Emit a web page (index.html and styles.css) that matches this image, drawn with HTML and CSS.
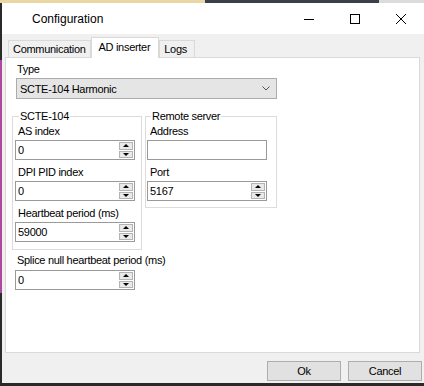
FILE: index.html
```html
<!DOCTYPE html>
<html lang="en">
<head>
  <meta charset="UTF-8" />
  <title>Configuration</title>
  <link rel="stylesheet" href="styles.css">
</head>
<body>
  <div class="desk-top"></div>
  <div class="window">
    <div class="titlebar">
      <div class="title">Configuration</div>
      <div class="caption-buttons">
        <div class="cap-btn">
          <svg width="10" height="10" viewBox="0 0 10 10"><path d="M0 5.5H10" stroke="#000" stroke-width="1"/></svg>
        </div>
        <div class="cap-btn">
          <svg width="10" height="10" viewBox="0 0 10 10"><rect x="0.5" y="0.5" width="9" height="9" fill="none" stroke="#000" stroke-width="1"/></svg>
        </div>
        <div class="cap-btn">
          <svg width="10" height="10" viewBox="0 0 10 10"><path d="M0 0L10 10M10 0L0 10" stroke="#000" stroke-width="1"/></svg>
        </div>
      </div>
    </div>

    <div class="tabs">
      <div class="tab">Communication</div>
      <div class="tab active">AD inserter</div>
      <div class="tab logs">Logs</div>
    </div>

    <div class="tab-page">
      <div class="label type-label">Type</div>
      <div class="combo">
        <span>SCTE-104 Harmonic</span>
        <svg width="8" height="5" viewBox="0 0 8 5"><path d="M0.5 0.5L4 4L7.5 0.5" fill="none" stroke="#555" stroke-width="1"/></svg>
      </div>

      <div class="groups">
        <fieldset class="group scte">
          <legend>SCTE-104</legend>
          <div class="label first">AS index</div>
          <div class="num"><span class="val">0</span><span class="spin"><span class="up"></span><span class="down"></span></span></div>
          <div class="label">DPI PID index</div>
          <div class="num"><span class="val">0</span><span class="spin"><span class="up"></span><span class="down"></span></span></div>
          <div class="label">Heartbeat period (ms)</div>
          <div class="num"><span class="val">59000</span><span class="spin"><span class="up"></span><span class="down"></span></span></div>
        </fieldset>

        <fieldset class="group remote">
          <legend>Remote server</legend>
          <div class="label first">Address</div>
          <div class="num text"><span class="val"></span></div>
          <div class="label">Port</div>
          <div class="num"><span class="val">5167</span><span class="spin"><span class="up"></span><span class="down"></span></span></div>
        </fieldset>
      </div>

      <div class="label splice-label">Splice null heartbeat period (ms)</div>
      <div class="num splice"><span class="val">0</span><span class="spin"><span class="up"></span><span class="down"></span></span></div>
    </div>

    <div class="dialog-buttons">
      <button>Ok</button>
      <button>Cancel</button>
    </div>
  </div>
</body>
</html>
```

FILE: styles.css
```css
body {
  margin: 0;
  height: 386px;
  overflow: hidden;
  font-family: 'Liberation Sans', Arial, sans-serif;
  font-size: 11px;
  letter-spacing: -0.3px;
  color: #000;
  background: linear-gradient(to bottom, #2a2a2a 0 60px, #b0479f 60px 293px, #2a2a2a 293px);
}
.desk-top {
  height: 3px;
  background: linear-gradient(to right, #e9d8a4 0 205px, #3a3f4a 205px 379px, #dcdcdc 379px);
}
.window {
  margin-left: 2px;
  height: 380px;
  padding-bottom: 2px;
  box-sizing: border-box;
  background: #f0f0f0;
}
.titlebar {
  display: flex;
  justify-content: space-between;
  align-items: center;
  height: 31px;
  background: #fff;
}
.title {
  padding-left: 30px;
  font-size: 12px;
  letter-spacing: 0;
}
.caption-buttons {
  display: flex;
  height: 100%;
}
.cap-btn {
  width: 46px;
  display: flex;
  align-items: center;
  justify-content: center;
}

.tabs {
  display: flex;
  align-items: flex-end;
  height: 20px;
  margin-top: 3px;
  padding-left: 6px;
}
.tab {
  box-sizing: border-box;
  height: 17px;
  line-height: 16px;
  padding: 0 4px;
  border: 1px solid #d9d9d9;
  border-bottom: none;
  background: #f0f0f0;
}
.tab.active {
  position: relative;
  z-index: 1;
  height: 21px;
  line-height: 18px;
  margin-bottom: -1px;
  padding: 0 8px 0 7px;
  background: #fff;
}
.tab.logs {
  padding: 0 7px 0 4px;
}
.tab-page {
  box-sizing: border-box;
  height: 296px;
  margin: 0 4px 0 3px;
  border: 1px solid #d9d9d9;
  background: #fff;
}

.label {
  line-height: 14px;
  margin-top: 5px;
  margin-left: 3px;
}
.label.first {
  margin-top: 1px;
}
.type-label {
  margin-top: 4px;
  margin-left: 11px;
}
.combo {
  box-sizing: border-box;
  display: flex;
  justify-content: space-between;
  align-items: center;
  width: 261px;
  height: 21px;
  margin: 2px 0 0 10px;
  padding: 0 6px 0 3px;
  border: 1px solid #acacac;
  background: #e5e5e5;
}

.groups {
  display: flex;
  align-items: flex-start;
  gap: 3px;
  margin: 10px 0 0 6px;
}
.group {
  box-sizing: border-box;
  min-width: 0;
  margin: 0;
  border: 1px solid #dcdcdc;
}
.group legend {
  line-height: 14px;
  padding: 0 1px;
  margin-left: 4px;
}
.scte {
  width: 130px;
  padding: 0 2px 7px 2px;
}
.remote {
  width: 132px;
  padding: 0 1px 6px 1px;
}

.num {
  box-sizing: border-box;
  display: flex;
  width: 120px;
  height: 20px;
  margin-top: 2px;
  border: 1px solid #9a9a9a;
  background: #fff;
}
.num .val {
  flex: 1;
  line-height: 18px;
  padding-left: 2px;
}
.spin {
  display: flex;
  flex-direction: column;
  gap: 1px;
  width: 14px;
  margin: 1px 1px 1px 0;
}
.spin span {
  flex: 1;
  display: flex;
  align-items: center;
  justify-content: center;
  border: 1px solid #b4b4b4;
  background: #e9e9e9;
}
.spin .up::after {
  content: "";
  border-left: 3px solid transparent;
  border-right: 3px solid transparent;
  border-bottom: 3px solid #000;
}
.spin .down::after {
  content: "";
  border-left: 3px solid transparent;
  border-right: 3px solid transparent;
  border-top: 3px solid #000;
}

.splice-label {
  margin-top: 3px;
  margin-left: 11px;
}
.num.splice {
  margin: 3px 0 0 9px;
}

.dialog-buttons {
  display: flex;
  justify-content: flex-end;
  gap: 7px;
  margin-top: 8px;
  padding-right: 2px;
}
.dialog-buttons button {
  width: 74px;
  height: 20px;
  padding: 0;
  font: inherit;
  letter-spacing: inherit;
  color: #000;
  border: 1px solid #adadad;
  background: #e1e1e1;
}
```
